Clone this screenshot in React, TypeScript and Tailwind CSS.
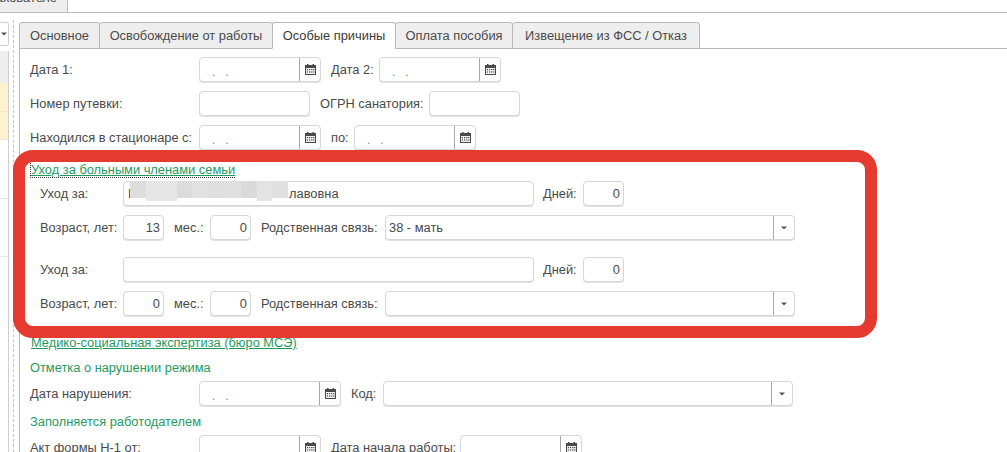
import React from "react";

const font = { fontFamily: '"Liberation Sans", Arial, sans-serif' };

function CalendarIcon() {
  return (
    <svg width="13" height="13" viewBox="0 0 13 13" aria-hidden="true">
      <rect x="1" y="2" width="11" height="10" fill="#4a4a4a" />
      <rect x="3" y="1" width="1.5" height="2" fill="#4a4a4a" />
      <rect x="8.5" y="1" width="1.5" height="2" fill="#4a4a4a" />
      <rect x="2" y="5" width="9" height="6" fill="#f2f2f2" />
      {[2.8, 5, 7.2, 9.2].map((x) =>
        [6, 8.4].map((y) => <rect key={`${x}-${y}`} x={x} y={y} width="1.2" height="1.2" fill="#4a4a4a" />)
      )}
    </svg>
  );
}

function Label({ children, className }: { children: React.ReactNode; className: string }) {
  return <div className={`shrink-0 whitespace-nowrap pt-[1px] ${className}`}>{children}</div>;
}

function Box({ className, children }: { className: string; children?: React.ReactNode }) {
  return (
    <div className={`shrink-0 h-[25px] flex items-center rounded-[4px] border border-[#d6d6d6] bg-white shadow-[0_1px_0_#e2e2e2] ${className}`}>
      {children}
    </div>
  );
}

function NumBox({ value, className }: { value: string; className: string }) {
  return <Box className={`justify-end pr-[3px] pt-[1px] ${className}`}>{value}</Box>;
}

function DateBox({ className }: { className: string }) {
  return (
    <Box className={className}>
      <div className="flex-1 h-full pl-[12px] pt-[5px] whitespace-pre text-[#888] text-[12px]">{".   ."}</div>
      <div className="w-[21px] h-full shrink-0 border-l border-[#a8a8a8] flex items-center justify-center">
        <CalendarIcon />
      </div>
    </Box>
  );
}

function SelectBox({ className, value }: { className: string; value?: string }) {
  return (
    <Box className={className}>
      <div className="flex-1 pl-[3px] pt-[1px] whitespace-nowrap">{value}</div>
      <div className="w-[21px] h-full shrink-0 border-l border-[#a8a8a8] flex items-center justify-center">
        <svg width="6" height="4" viewBox="0 0 6 4" aria-hidden="true">
          <path d="M0 0.5H6L3 3.5Z" fill="#555" />
        </svg>
      </div>
    </Box>
  );
}

function Row({ className, children }: { className: string; children: React.ReactNode }) {
  return <div className={`flex items-center h-[25px] ${className}`}>{children}</div>;
}

function Tab({ label, className, active }: { label: string; className: string; active?: boolean }) {
  return (
    <div
      className={`h-[27px] shrink-0 flex items-center justify-center rounded-t-[3px] border border-[#b9b9b9] whitespace-nowrap ${
        active ? "bg-white border-b-white text-[#3a3a3a]" : "bg-[#eeeeee]"
      } ${className}`}
    >
      {label}
    </div>
  );
}

export default function App() {
  return (
    <div className="relative w-[1007px] h-[452px] overflow-hidden bg-white text-[#4a4a4a] text-[12.85px]" style={font}>
      <div className="h-[13px] border-b border-[#bdbdbd] overflow-hidden">
        <div className="w-[68px] h-[12px] bg-[#eeeeee] border-r border-[#bdbdbd] flex justify-end pr-[10px] items-end overflow-hidden">
          <span className="whitespace-nowrap leading-[14px] translate-y-[-7px]">ахователе</span>
        </div>
      </div>

      <div className="flex h-[439px]">
        <div className="w-[9px] shrink-0 pt-[9px]">
          <div className="h-[24px] border border-l-0 border-[#cfcfcf] rounded-r-[3px] flex items-center justify-end pr-[1px]">
            <svg width="6" height="4" viewBox="0 0 6 4" aria-hidden="true">
              <path d="M0 0.5H6L3 3.5Z" fill="#555" />
            </svg>
          </div>
          <div className="mt-[5px] border-r border-[#cfcfcf] h-[401px]">
            <div className="h-[32px] bg-[#eeeeee]" />
            <div className="h-[29px] bg-[#fdf3cf] border-b border-[#f3e8bf]" />
            <div className="h-[28px] bg-[#fdf3cf] border-b border-[#e6e6e6]" />
            <div className="h-[59px] border-b border-[#e6e6e6]" />
            <div className="h-[58px] border-b border-[#e6e6e6]" />
          </div>
        </div>
        <div className="w-[10px] shrink-0 pl-[4px] pt-[7px]">
          <div className="h-full border-l border-dashed border-[#c4c4c4]" />
        </div>

        <div className="flex-1 min-w-0 pt-[9px]">
          <div className="flex h-[27px] border-b border-[#b9b9b9]">
            <Tab label="Основное" className="w-[81px]" />
            <Tab label="Освобождение от работы" className="w-[174px] -ml-px" />
            <Tab label="Особые причины" className="w-[124px] -ml-px" active />
            <Tab label="Оплата пособия" className="w-[118px] -ml-px" />
            <Tab label="Извещение из ФСС / Отказ" className="w-[188px] -ml-px" />
          </div>

          <div className="border-l border-[#b9b9b9] h-[403px] pl-[10px] pt-[8px]">
            <Row className="">
              <Label className="w-[169px]">Дата 1:</Label>
              <DateBox className="w-[122px]" />
              <Label className="ml-[10px] w-[48px]">Дата 2:</Label>
              <DateBox className="w-[122px]" />
            </Row>
            <Row className="mt-[9px]">
              <Label className="w-[169px]">Номер путевки:</Label>
              <Box className="w-[111px]" />
              <Label className="ml-[10px] w-[109px]">ОГРН санатория:</Label>
              <Box className="w-[91px]" />
            </Row>
            <Row className="mt-[9px]">
              <Label className="w-[169px]">Находился в стационаре с:</Label>
              <DateBox className="w-[122px]" />
              <Label className="ml-[10px] w-[23px]">по:</Label>
              <DateBox className="w-[122px]" />
            </Row>

            <div className="mt-[9px] h-[18px] pt-[1px]">
              <span className="inline-block h-[15px] leading-[14px] border-l border-b border-dotted border-[#333] text-[#1f9a5f] underline">
                Уход за больными членами семьи
              </span>
            </div>
            <Row className="mt-[4px] pl-[10px]">
              <Label className="w-[83px]">Уход за:</Label>
              <Box className="w-[411px] pl-[4px] pt-[1px] whitespace-nowrap">
                <span className="inline-block w-[161px]">Ш</span>лавовна
              </Box>
              <Label className="ml-[9px] w-[40px]">Дней:</Label>
              <NumBox value="0" className="w-[41px]" />
            </Row>
            <Row className="mt-[9px] pl-[10px]">
              <Label className="w-[83px]">Возраст, лет:</Label>
              <NumBox value="13" className="w-[41px]" />
              <Label className="ml-[10px] w-[36px]">мес.:</Label>
              <NumBox value="0" className="w-[41px]" />
              <Label className="ml-[10px] w-[124px]">Родственная связь:</Label>
              <SelectBox className="w-[410px]" value="38 - мать" />
            </Row>
            <Row className="mt-[17px] pl-[10px]">
              <Label className="w-[83px]">Уход за:</Label>
              <Box className="w-[411px]" />
              <Label className="ml-[9px] w-[40px]">Дней:</Label>
              <NumBox value="0" className="w-[41px]" />
            </Row>
            <Row className="mt-[9px] pl-[10px]">
              <Label className="w-[83px]">Возраст, лет:</Label>
              <NumBox value="0" className="w-[41px]" />
              <Label className="ml-[10px] w-[36px]">мес.:</Label>
              <NumBox value="0" className="w-[41px]" />
              <Label className="ml-[10px] w-[124px]">Родственная связь:</Label>
              <SelectBox className="w-[410px]" />
            </Row>

            <div className="mt-[18px] h-[18px] pl-[1px] leading-[18px] text-[#1f9a5f] underline">
              Медико-социальная экспертиза (бюро МСЭ)
            </div>
            <div className="mt-[7px] h-[18px] leading-[18px] text-[#1f9a5f]">Отметка о нарушении режима</div>
            <Row className="mt-[4px]">
              <Label className="w-[169px]">Дата нарушения:</Label>
              <DateBox className="w-[142px]" />
              <Label className="ml-[10px] w-[32px]">Код:</Label>
              <SelectBox className="w-[410px]" />
            </Row>
            <div className="mt-[7px] h-[18px] leading-[18px] text-[#1f9a5f]">Заполняется работодателем</div>
            <Row className="mt-[4px]">
              <Label className="w-[169px]">Акт формы Н-1 от:</Label>
              <DateBox className="w-[122px]" />
              <Label className="ml-[10px] w-[129px]">Дата начала работы:</Label>
              <DateBox className="w-[122px]" />
            </Row>
          </div>
        </div>
      </div>

      <div className="absolute left-[130px] top-[181px] h-[17px] w-[158px] flex">
        <div className="w-[16px] bg-[#dddddd]" />
        <div className="w-[31px] h-[20px] bg-[#e6e6e6]" />
        <div className="w-[15px] bg-[#dcdcdc]" />
        <div className="w-[16px] bg-[#e2e2e2]" />
        <div className="w-[16px] bg-[#dedede]" />
        <div className="w-[17px] bg-[#e0e0e0]" />
        <div className="w-[16px] bg-[#d9d9d9]" />
        <div className="w-[15px] h-[20px] bg-[#e3e3e3]" />
        <div className="w-[16px] bg-[#e0e0e0]" />
      </div>

      <div className="absolute left-[13px] top-[150px] w-[864px] h-[188px] rounded-[20px] border-[12px] border-[#e53a30] pointer-events-none" />
    </div>
  );
}
